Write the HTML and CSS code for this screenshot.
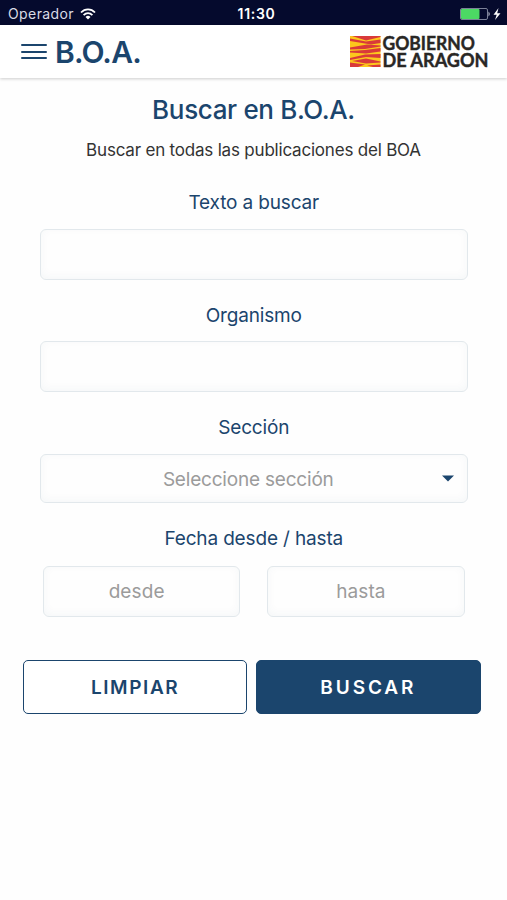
FILE: index.html
```html
<!DOCTYPE html>
<html lang="es">
<head>
  <meta charset="UTF-8">
  <meta name="viewport" content="width=device-width, initial-scale=1">
  <title>Buscar en B.O.A.</title>
  <link rel="stylesheet" href="styles.css">
</head>
<body>
  <div class="status-bar">
    <div class="carrier">
      <span>Operador</span>
      <svg class="wifi" width="16" height="12" viewBox="0 0 16 12" fill="none" stroke="#fff" stroke-width="1.8">
        <path d="M1 4.5C5 .3 11 .3 15 4.5"/>
        <path d="M3.6 7.1C6.2 4.5 9.8 4.5 12.4 7.1"/>
        <path d="M8 11.4L5.5 8.9Q8 6.7 10.5 8.9Z" fill="#fff" stroke="none"/>
      </svg>
    </div>
    <div class="clock">11:30</div>
    <div class="power">
      <svg width="42" height="14" viewBox="0 0 42 14">
        <rect x=".5" y="1.5" width="27" height="11" rx="1.5" fill="none" stroke="#7b8198"/>
        <rect x="1" y="2" width="18.5" height="10" rx="1" fill="#4cd964"/>
        <path d="M28.5 4.5q2.500 2.500 0 5z" fill="#b9bccb"/>
        <path d="M38.5 1L33.5 7.700h3.200L35 13 40.500 6.200h-3.300z" fill="#fff"/>
      </svg>
    </div>
  </div>

  <header class="header">
    <button class="menu-btn" aria-label="Menú"><span></span><span></span><span></span></button>
    <div class="brand">B.O.A.</div>
    <svg class="logo" width="142" height="44" viewBox="0 -5 142 44">
      <rect x="1" y="1" width="30.5" height="31" fill="#fcc81c"/>
      <!-- wavy red bars of the flag -->
      <g fill="#d93a3a">
        <path d="M3 1H31.500V2L17 5.500z"/>
        <path d="M1 3.500L17 6.500 31.500 4.500V8L22 9.500 1 6z"/>
        <path d="M1 12.500L18 9.500 31.500 10.500V11.500L16 14 1 14.500z"/>
        <path d="M1 16L16 15 31.500 13V16.500L17 18.500 1 17.500z"/>
        <path d="M1 23L16 19.500 31.500 19V23L17 22 1 25z"/>
        <path d="M3 26L17 23.500 31.500 26.500V27.500L17 28.500z"/>
        <path d="M1 27.500L16 29.500 9 32H1z"/>
        <path d="M18 30.500L31.500 29.500V32H24z"/>
      </g>
      <text class="logo-text" x="33.500" y="15" textLength="92.500" lengthAdjust="spacingAndGlyphs">GOBIERNO</text>
      <text class="logo-text" x="33.500" y="32" textLength="106" lengthAdjust="spacingAndGlyphs">DE ARAGON</text>
    </svg>
  </header>

  <main class="search">
    <h1>Buscar en B.O.A.</h1>
    <p class="intro">Buscar en todas las publicaciones del BOA</p>

    <form>
      <label class="texto" for="texto">Texto a buscar</label>
      <input class="field" id="texto" type="text">

      <label class="organismo" for="organismo">Organismo</label>
      <input class="field" id="organismo" type="text">

      <label class="seccion" for="seccion">Sección</label>
      <button class="field select" id="seccion" type="button">
        <span>Seleccione sección</span>
        <svg width="12" height="7" viewBox="0 0 12 7"><path d="M0 .5h12L6 6.500z" fill="#1b456d"/></svg>
      </button>

      <label class="fecha" for="desde">Fecha desde / hasta</label>
      <div class="dates">
        <button class="field date" id="desde" type="button">desde</button>
        <button class="field date" id="hasta" type="button">hasta</button>
      </div>

      <div class="actions">
        <button class="btn btn-clear" type="reset">LIMPIAR</button>
        <button class="btn btn-search" type="button">BUSCAR</button>
      </div>
    </form>
  </main>
</body>
</html>
```
FILE: styles.css
```css
* {
  box-sizing: border-box;
}
body {
  margin: 0;
  min-height: 900px;
  background: #fefefe;
  color: #1b456d;
  font-family: Inter, "Liberation Sans", sans-serif;
}
button, input {
  font-family: inherit;
  margin: 0;
}
.status-bar {
  display: grid;
  grid-template-columns: 1fr auto 1fr;
  align-items: center;
  height: 25px;
  padding: 2px 5px 0 8px;
  background: #050a2d;
  color: #fff;
  font-size: 14px;
}
.carrier {
  display: flex;
  align-items: center;
  gap: 6px;
  color: #d9dbe5;
  letter-spacing: 0.4px;
}
.clock {
  padding-left: 3px;
  font-weight: 600;
  letter-spacing: 0.7px;
}
.power {
  display: flex;
  justify-content: flex-end;
}
.header {
  display: flex;
  align-items: center;
  height: 53px;
  padding: 0 16px 0 21px;
  background: #fff;
  box-shadow: 0 1px 3px rgba(0,0,0,0.2);
}
.menu-btn {
  display: flex;
  flex-direction: column;
  gap: 4.5px;
  width: 26px;
  padding: 0;
  border: none;
  background: none;
}
.menu-btn span {
  height: 2px;
  border-radius: 1px;
  background: #1b456d;
}
.brand {
  margin-left: 8px;
  font-size: 30px;
  font-weight: 600;
  letter-spacing: -0.8px;
}
.logo {
  margin-left: auto;
}
.logo-text {
  font-family: Lato, sans-serif;
  font-size: 18px;
  font-weight: 700;
  fill: #292725;
  stroke: #292725;
  stroke-width: 0.4px;
}
.search {
  text-align: center;
}
h1 {
  margin: 14px 0 0;
  font-size: 26px;
  font-weight: 500;
  line-height: 36px;
  letter-spacing: -0.35px;
}
.intro {
  margin: 12px 0 0;
  color: #333;
  font-size: 17px;
  line-height: 21px;
  letter-spacing: -0.2px;
}
form {
  padding: 0 39.5px 0 40px;
}
label {
  display: block;
  margin: 24px 0 13px;
  font-size: 19px;
  line-height: 24.5px;
  letter-spacing: -0.15px;
}
form > .texto {
  margin-top: 30px;
}
form > .fecha {
  margin-bottom: 15px;
}
.field {
  display: block;
  width: 100%;
  height: 51px;
  padding: 0;
  border: 1.5px solid #e2e8ec;
  border-radius: 6px;
  background: #fefefe;
  box-shadow: inset 0 -2px 10px rgba(27,69,109,0.04);
  color: #9b9b9b;
  font-size: 19px;
  letter-spacing: -0.2px;
  text-align: center;
}
.select {
  display: flex;
  align-items: center;
  height: 49px;
  padding: 0 13px 0 14px;
}
.select span {
  flex: 1;
  padding-top: 3px;
}
.dates {
  display: flex;
  gap: 27px;
  padding: 0 3px;
}
.date {
  padding: 0 10px 0 0;
  letter-spacing: 0.1px;
}
.actions {
  display: flex;
  gap: 9px;
  margin: 43px -13px 0 -17px;
}
.btn {
  flex: 1;
  height: 54px;
  padding: 0;
  border: 1.5px solid #1b456d;
  border-radius: 5px;
  font-size: 19px;
  font-weight: 600;
}
.btn-clear {
  background: #fff;
  color: #1b456d;
  letter-spacing: 1.6px;
}
.btn-search {
  background: #1b456d;
  color: #fff;
  letter-spacing: 2.9px;
}
```
